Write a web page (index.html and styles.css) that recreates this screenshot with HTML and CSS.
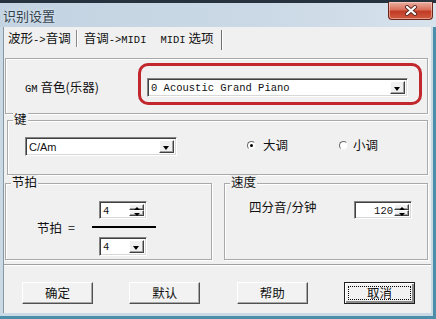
FILE: index.html
```html
<!DOCTYPE html>
<html lang="zh-CN">
<head>
<meta charset="utf-8">
<title>识别设置</title>
<link rel="stylesheet" href="styles.css">
</head>
<body>
<div class="window">
  <div class="titlebar">
    <span class="title">识别设置</span>
    <div class="close">
      <svg width="14" height="11" viewBox="0 0 14 11"><path d="M3 2 L11 9 M11 2 L3 9" stroke="#5a2a22" stroke-width="4" stroke-linecap="round"/><path d="M3 2 L11 9 M11 2 L3 9" stroke="#fff" stroke-width="2.2" stroke-linecap="round"/></svg>
    </div>
  </div>
  <div class="wbody">
    <div class="client">
      <div class="tabs">
        <span class="tab tab1">波形<span class="lat">-&gt;</span>音调</span>
        <span class="sep"></span>
        <span class="tab tab2">音调<span class="lat">-&gt;MIDI</span></span>
        <span class="tab tab3"><span class="lat">MIDI</span> 选项</span>
        <span class="sep sep2"></span>
      </div>
      <div class="page">
        <div class="etched gm">
          <span class="gm-label"><span class="lat">GM</span> 音色(乐器)</span>
          <div class="mark">
            <div class="combo combo-gm"><span class="val">0 Acoustic Grand Piano</span><span class="drop"></span></div>
          </div>
        </div>
        <div class="etched group key">
          <span class="legend">键</span>
          <div class="combo combo-key"><span class="val">C/Am</span><span class="drop"></span></div>
          <span class="radio r1"><span class="dot checked"></span>大调</span>
          <span class="radio r2"><span class="dot"></span>小调</span>
        </div>
        <div class="row">
          <div class="etched group beat">
            <span class="legend">节拍</span>
            <span class="beat-label"><span>节拍</span><span>=</span></span>
            <div class="frac">
              <div class="spin spin-num"><span class="val">4</span><span class="arrows"><i class="up"></i><i class="dn"></i></span></div>
              <div class="bar"></div>
              <div class="combo combo-den"><span class="val">4</span><span class="drop"></span></div>
            </div>
          </div>
          <div class="etched group tempo">
            <span class="legend">速度</span>
            <span class="tempo-label">四分音/分钟</span>
            <div class="spin spin-bpm"><span class="val">120</span><span class="arrows"><i class="up"></i><i class="dn"></i></span></div>
          </div>
        </div>
      </div>
      <div class="buttons">
        <div class="btn">确定</div>
        <div class="btn">默认</div>
        <div class="btn">帮助</div>
        <div class="btn cancel"><span class="focus">取消</span></div>
      </div>
    </div>
  </div>
</div>
</body>
</html>
```
FILE: styles.css
```css
* { box-sizing: border-box; margin: 0; padding: 0; }
html, body { width: 436px; height: 319px; overflow: hidden; }
body {
  font-family: "Noto Sans CJK SC", "Noto Sans", sans-serif;
  font-size: 12.5px;
  color: #111;
  background: #c9d9e6;
}
.lat { font-family: "Liberation Mono", monospace; font-size: 10.5px; }

.window { width: 436px; height: 319px; display: flex; flex-direction: column; }

.titlebar {
  height: 27px;
  flex: none;
  display: flex;
  align-items: flex-start;
  justify-content: space-between;
  border-top: 3px solid #26323d;
  background: linear-gradient(90deg, #c3d3e1, #cbd9e6 60%, #d6e2ec);
  padding-right: 3px;
}
.title {
  margin: 5px 0 0 3px;
  font-size: 13px;
  line-height: 16px;
  color: #34424e;
  text-shadow: 0 0 3px #e8f0f6;
}
.close {
  width: 45px;
  height: 18px;
  margin-top: -1px;
  border: 1px solid #6b2419;
  border-top: none;
  border-radius: 0 0 4px 4px;
  background: linear-gradient(#eab0a2, #d9705b 45%, #c23b25 55%, #cf5a40);
  box-shadow: inset 0 0 0 1px rgba(255,220,210,0.5);
  display: flex;
  align-items: center;
  justify-content: center;
}

.wbody {
  flex: 1;
  display: flex;
  padding: 0 2px 3px 3px;
  border-right: 3px solid #4a8ea9;
  border-bottom: 3px solid #4a8ea9;
}
.client {
  flex: 1;
  display: flex;
  flex-direction: column;
  background: #f0f0f0;
  border-left: 1px solid #8896a3;
}

.tabs { height: 23px; flex: none; display: flex; align-items: center; padding-left: 4px; }
.tab { line-height: 16px; white-space: nowrap; }
.tab1 { padding-right: 5px; }
.tab2 { padding-left: 6px; }
.tab3 { margin-left: 14px; padding-right: 7px; }
.sep { width: 2px; height: 17px; border-left: 1px solid #8a8a8a; border-right: 1px solid #fff; }
.sep2 { height: 20px; border-left-color: #6e6e6e; margin-top: 2px; }

.page {
  flex: none;
  padding: 8px 3px 4px 1px;
  border-bottom: 1px solid #a0a0a0;
  box-shadow: 0 1px 0 #fff;
}

.etched {
  border: 1px solid #a9a9a9;
  box-shadow: inset 1px 1px 0 #fff, 1px 1px 0 #fff;
}
.group { position: relative; }
.legend {
  position: absolute;
  top: -9px;
  left: 5px;
  padding: 0 1px;
  background: #f0f0f0;
  line-height: 14px;
}

.gm { height: 56px; display: flex; align-items: flex-start; padding: 4px 5px 0 19px; }
.gm-label { margin-top: 17px; line-height: 14px; }
.mark {
  margin-left: auto;
  width: 284px;
  height: 42px;
  border: 3px solid #c1272d;
  border-radius: 10px;
  padding: 12px 11px 0 6px;
}

.combo, .spin {
  display: flex;
  background: #fff;
  border: 1px solid;
  border-color: #848484 #fff #fff #848484;
  box-shadow: inset 1px 1px 0 #404040, inset -1px -1px 0 #d8d8d8;
  padding: 2px;
}
.val {
  flex: 1;
  font-family: "Liberation Mono", monospace;
  font-size: 10.5px;
  line-height: 14px;
  padding-left: 1px;
  white-space: nowrap;
  overflow: hidden;
}
.drop, .arrows i {
  position: relative;
  background: #f0f0f0;
  border: 1px solid;
  border-color: #fff #404040 #404040 #fff;
  box-shadow: inset -1px -1px 0 #a0a0a0;
}
.drop { width: 15px; flex: none; }
.drop::after {
  content: "";
  position: absolute;
  left: 3px;
  top: 5px;
  border-left: 3.5px solid transparent;
  border-right: 3.5px solid transparent;
  border-top: 4px solid #000;
}
.combo-gm { width: 261px; height: 19px; }

.key { margin: 6px 0 0 2px; height: 55px; display: flex; align-items: flex-start; padding: 16px 0 0 17px; }
.combo-key { width: 152px; height: 19px; }
.combo-key .val { font-family: "Liberation Sans", sans-serif; font-size: 11px; }
.radio { display: flex; align-items: center; gap: 7px; line-height: 14px; margin-top: 1px; }
.r1 { margin-left: 70px; }
.r2 { margin-left: 51px; gap: 5px; }
.dot {
  position: relative;
  width: 9px;
  height: 9px;
  border-radius: 50%;
  border: 1px solid;
  border-color: #6a6a6a #f4f4f4 #f4f4f4 #6a6a6a;
  background: #fff;
}
.dot.checked::after {
  content: "";
  position: absolute;
  left: 2px;
  top: 2px;
  width: 3px;
  height: 3px;
  border-radius: 50%;
  background: #000;
}

.row { display: flex; gap: 12px; margin-top: 8px; }
.beat { width: 207px; height: 77px; display: flex; align-items: flex-start; padding-left: 31px; }
.beat-label { margin-top: 37px; line-height: 14px; display: flex; gap: 6px; }
.frac { margin-left: 17px; width: 64px; padding-top: 17px; display: flex; flex-direction: column; }
.spin-num { width: 48px; height: 18px; margin-left: 7px; }
.bar { height: 2px; background: #000; margin: 7px 0 9px; }
.combo-den { width: 48px; height: 19px; margin-left: 7px; }

.arrows { width: 15px; flex: none; display: flex; flex-direction: column; }
.arrows i { flex: 1; display: block; }
.arrows i::after {
  content: "";
  position: absolute;
  left: 4px;
  border-left: 3px solid transparent;
  border-right: 3px solid transparent;
}
.arrows .up::after { top: 2px; border-bottom: 3px solid #000; }
.arrows .dn::after { top: 2px; border-top: 3px solid #000; }

.tempo { flex: 1; height: 77px; display: flex; align-items: flex-start; padding: 16px 15px 0 24px; }
.tempo-label { line-height: 14px; }
.spin-bpm { width: 58px; height: 18px; margin: 1px 0 0 auto; }
.spin-bpm .val { text-align: right; padding-right: 1px; }

.buttons {
  flex: 1;
  display: flex;
  justify-content: space-between;
  align-items: flex-start;
  padding: 17px 16px 0 18px;
}
.btn {
  width: 71px;
  height: 22px;
  display: flex;
  align-items: center;
  justify-content: center;
  background: #f2f2f2;
  border: 1px solid;
  border-color: #fff #505050 #505050 #fff;
  box-shadow: inset -1px -1px 0 #a8a8a8;
  line-height: 14px;
}
.btn.cancel {
  border: 1px solid #1e1e1e;
  box-shadow: inset 1px 1px 0 #fff, inset -2px -2px 0 #8a8a8a;
  padding: 3px;
}
.focus {
  flex: 1;
  align-self: stretch;
  display: flex;
  align-items: center;
  justify-content: center;
  border: 1px dotted #000;
}
```
